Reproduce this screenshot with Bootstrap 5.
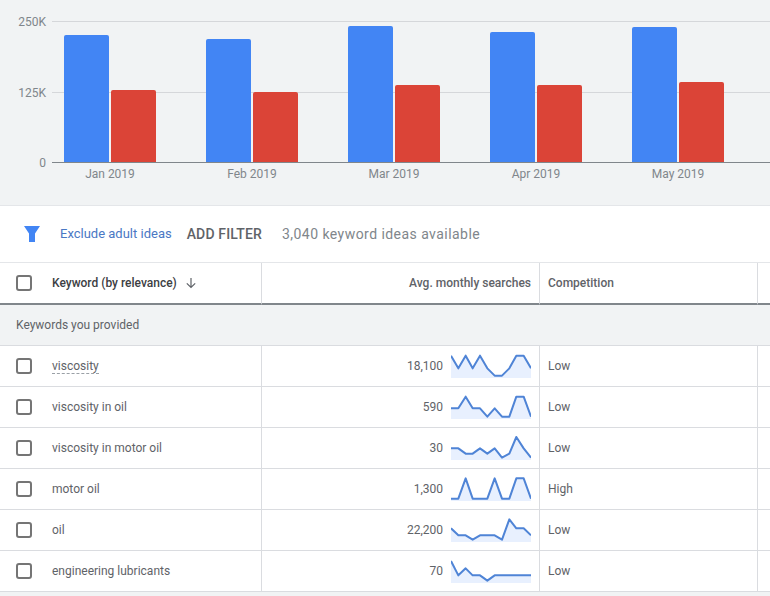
<!DOCTYPE html>
<html lang="en">
<head>
<meta charset="utf-8">
<title>Keyword ideas</title>
<link href="https://cdn.jsdelivr.net/npm/bootstrap@5.3.0/dist/css/bootstrap.min.css" rel="stylesheet">
<style>
html,body{height:100%;overflow:hidden}
body{font-family:Roboto,"Liberation Sans",sans-serif;font-size:12px;color:#5f6368;background:#f1f3f4}
.chart-panel{height:206px;background:#f1f3f4;border-bottom:1px solid #e4e6e9}
.axis-col{width:46px;height:155px;margin-top:15px;color:#80868b;line-height:14px}
.plot-col{width:718px;margin-left:6px;margin-top:21px}
.plot-area{height:142px;border-bottom:1px solid #80868b}
.grid-line{left:0;right:0;height:1px;background:#d5d7da}
.grid-top{top:0}
.grid-mid{top:71px}
.bar-group{width:142px;padding-left:12px;gap:2px}
.bar-blue,.bar-red{width:45px;border-radius:2px 2px 0 0;position:relative}
.bar-blue{background:#4285f4}
.bar-red{background:#db4437}
.month-label{width:142px;padding-left:12px;padding-right:38px;text-align:center;color:#80868b;line-height:14px;margin-top:4px}
.filter-bar{height:57px;background:#fff;border-bottom:1px solid #e4e6e9;padding-left:24px}
.filter-link{margin-left:20px;font-size:13px;color:#4a78c4;text-decoration:none}
.filter-add{margin-left:15px;font-size:14px;font-weight:500;color:#5f6368;letter-spacing:.15px}
.filter-count{margin-left:20px;font-size:14px;color:#80868b;letter-spacing:.45px}
.kw-table{table-layout:fixed;width:770px;border-collapse:separate;border-spacing:0;margin:0;background:#fff}
.kw-table th,.kw-table td{height:41px;padding:0 8px;border-bottom:1px solid #dadce0;vertical-align:middle;font-size:12px;font-weight:400;color:#5f6368;background:#fff;box-shadow:none}
.kw-table th{height:42px;border-bottom:2px solid #80868b;font-weight:500}
.kw-table .cell-key,.kw-table .cell-num,.kw-table .cell-comp{border-right:1px solid #dadce0}
.kw-table .cell-key{padding:0 0 0 16px}
.kw-table .head-key{color:#3c4043}
.kw-table .cell-group{background:#f1f3f4;padding-left:16px}
.kw-check{width:16px;height:16px;margin:0 20px 0 0;border:2px solid #757575;border-radius:2px;background-color:#fff;flex:none}
.kw-hint{border-bottom:1px dashed #9aa0a6;line-height:14px;margin-top:1px}
.sort-arrow{margin-left:8px}
.spark{width:80px;height:24px;margin-left:8px;flex:none}
.spark polygon{fill:#e8f0fe;stroke:none}
.spark polyline{fill:none;stroke:#4f84d6;stroke-width:6;stroke-linejoin:round}
</style>
</head>
<body>
<div class="chart-panel d-flex">
  <div class="axis-col d-flex flex-column justify-content-between text-end">
    <span>250K</span><span>125K</span><span>0</span>
  </div>
  <div class="plot-col">
    <div class="plot-area position-relative d-flex align-items-end">
      <div class="grid-line grid-top position-absolute"></div>
      <div class="grid-line grid-mid position-absolute"></div>
      <div class="bar-group d-flex align-items-end"><div class="bar-blue" style="height:127px"></div><div class="bar-red" style="height:72px"></div></div>
      <div class="bar-group d-flex align-items-end"><div class="bar-blue" style="height:123px"></div><div class="bar-red" style="height:70px"></div></div>
      <div class="bar-group d-flex align-items-end"><div class="bar-blue" style="height:136px"></div><div class="bar-red" style="height:77px"></div></div>
      <div class="bar-group d-flex align-items-end"><div class="bar-blue" style="height:130px"></div><div class="bar-red" style="height:77px"></div></div>
      <div class="bar-group d-flex align-items-end"><div class="bar-blue" style="height:135px"></div><div class="bar-red" style="height:80px"></div></div>
    </div>
    <div class="d-flex">
      <div class="month-label">Jan 2019</div>
      <div class="month-label">Feb 2019</div>
      <div class="month-label">Mar 2019</div>
      <div class="month-label">Apr 2019</div>
      <div class="month-label">May 2019</div>
    </div>
  </div>
</div>
<div class="filter-bar d-flex align-items-center">
  <svg width="16" height="16" viewBox="0 0 16 16" aria-hidden="true"><path d="M0 0h16l-5 7.500V16H5V7.500z" fill="#4285f4"/></svg>
  <a class="filter-link" href="#">Exclude adult ideas</a>
  <span class="filter-add">ADD FILTER</span>
  <span class="filter-count">3,040 keyword ideas available</span>
</div>
<table class="table kw-table">
  <colgroup><col style="width:262px"><col style="width:278px"><col style="width:218px"><col style="width:12px"></colgroup>
  <thead>
    <tr>
      <th class="cell-key head-key"><div class="d-flex align-items-center"><input class="form-check-input kw-check" type="checkbox" aria-label="Select all">Keyword (by relevance)<svg class="sort-arrow" width="12" height="12" viewBox="0 0 12 12" aria-hidden="true"><path d="M6 1v9.500M1.800 6.300 6 10.500l4.200-4.200" fill="none" stroke="#5f6368" stroke-width="1.200"/></svg></div></th>
      <th class="cell-num text-end">Avg. monthly searches</th>
      <th class="cell-comp">Competition</th>
      <th></th>
    </tr>
  </thead>
  <tbody>
    <tr><td class="cell-group" colspan="4">Keywords you provided</td></tr>
    <tr>
      <td class="cell-key"><div class="d-flex align-items-center"><input class="form-check-input kw-check" type="checkbox" aria-label="Select"><span class="kw-hint">viscosity</span></div></td>
      <td class="cell-num"><div class="d-flex align-items-center justify-content-end">18,100<svg class="spark" viewBox="0 27 240 72" aria-hidden="true"><polygon points="0,32 22,70 44,32 65,70 87,32 109,70 131,92 153,92 175,70 196,32 218,32 240,70 240,99 0,99"/><polyline points="0,32 22,70 44,32 65,70 87,32 109,70 131,92 153,92 175,70 196,32 218,32 240,70"/></svg></div></td>
      <td class="cell-comp">Low</td><td></td>
    </tr>
    <tr>
      <td class="cell-key"><div class="d-flex align-items-center"><input class="form-check-input kw-check" type="checkbox" aria-label="Select">viscosity in oil</div></td>
      <td class="cell-num"><div class="d-flex align-items-center justify-content-end">590<svg class="spark" viewBox="0 27 240 72" aria-hidden="true"><polygon points="0,67 22,67 44,32 65,67 87,67 109,92 131,67 153,92 175,92 196,32 218,32 240,92 240,99 0,99"/><polyline points="0,67 22,67 44,32 65,67 87,67 109,92 131,67 153,92 175,92 196,32 218,32 240,92"/></svg></div></td>
      <td class="cell-comp">Low</td><td></td>
    </tr>
    <tr>
      <td class="cell-key"><div class="d-flex align-items-center"><input class="form-check-input kw-check" type="checkbox" aria-label="Select">viscosity in motor oil</div></td>
      <td class="cell-num"><div class="d-flex align-items-center justify-content-end">30<svg class="spark" viewBox="0 27 240 72" aria-hidden="true"><polygon points="0,64 22,64 44,80 65,80 87,64 109,80 131,64 153,92 175,80 196,30 218,64 240,92 240,99 0,99"/><polyline points="0,64 22,64 44,80 65,80 87,64 109,80 131,64 153,92 175,80 196,30 218,64 240,92"/></svg></div></td>
      <td class="cell-comp">Low</td><td></td>
    </tr>
    <tr>
      <td class="cell-key"><div class="d-flex align-items-center"><input class="form-check-input kw-check" type="checkbox" aria-label="Select">motor oil</div></td>
      <td class="cell-num"><div class="d-flex align-items-center justify-content-end">1,300<svg class="spark" viewBox="0 27 240 72" aria-hidden="true"><polygon points="0,92 22,92 44,31 65,92 87,92 109,92 131,31 153,92 175,92 196,31 218,31 240,92 240,99 0,99"/><polyline points="0,92 22,92 44,31 65,92 87,92 109,92 131,31 153,92 175,92 196,31 218,31 240,92"/></svg></div></td>
      <td class="cell-comp">High</td><td></td>
    </tr>
    <tr>
      <td class="cell-key"><div class="d-flex align-items-center"><input class="form-check-input kw-check" type="checkbox" aria-label="Select">oil</div></td>
      <td class="cell-num"><div class="d-flex align-items-center justify-content-end">22,200<svg class="spark" viewBox="0 27 240 72" aria-hidden="true"><polygon points="0,58 22,79 44,79 65,92 87,79 109,79 131,79 153,92 175,31 196,58 218,58 240,79 240,99 0,99"/><polyline points="0,58 22,79 44,79 65,92 87,79 109,79 131,79 153,92 175,31 196,58 218,58 240,79"/></svg></div></td>
      <td class="cell-comp">Low</td><td></td>
    </tr>
    <tr>
      <td class="cell-key"><div class="d-flex align-items-center"><input class="form-check-input kw-check" type="checkbox" aria-label="Select">engineering lubricants</div></td>
      <td class="cell-num"><div class="d-flex align-items-center justify-content-end">70<svg class="spark" viewBox="0 27 240 72" aria-hidden="true"><polygon points="0,33 22,76 44,55 65,76 87,76 109,92 131,76 153,76 175,76 196,76 218,76 240,76 240,99 0,99"/><polyline points="0,33 22,76 44,55 65,76 87,76 109,92 131,76 153,76 175,76 196,76 218,76 240,76"/></svg></div></td>
      <td class="cell-comp">Low</td><td></td>
    </tr>
  </tbody>
</table>
<script src="https://cdn.jsdelivr.net/npm/bootstrap@5.3.0/dist/js/bootstrap.bundle.min.js"></script>
</body>
</html>
